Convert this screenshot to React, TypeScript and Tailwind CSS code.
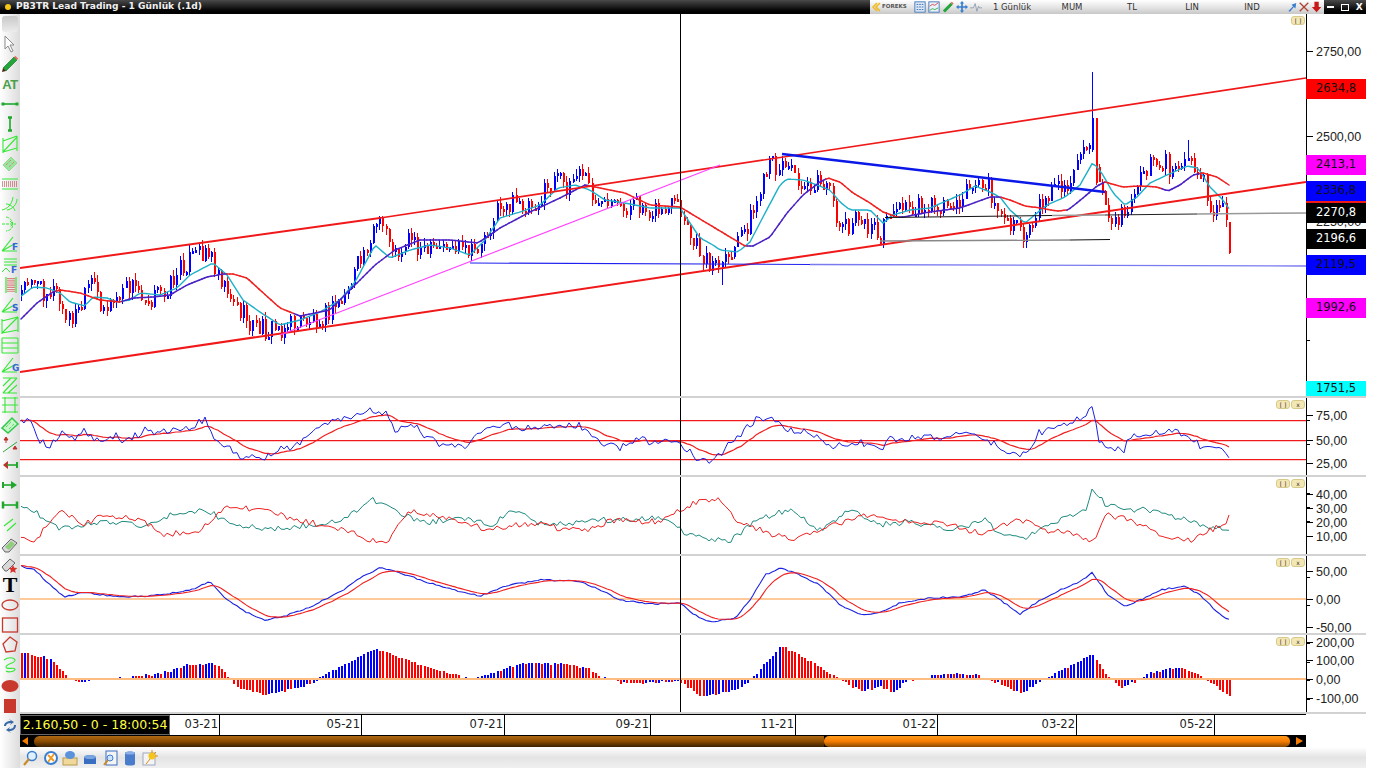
import type { ReactNode } from "react";

type Pt = [number, number];

const lerp = (pts: Pt[], x: number) => {
  if (x <= pts[0][0]) return pts[0][1];
  for (let i = 1; i < pts.length; i++) {
    if (x <= pts[i][0]) {
      const [x0, y0] = pts[i - 1];
      const [x1, y1] = pts[i];
      return y0 + ((y1 - y0) * (x - x0)) / (x1 - x0);
    }
  }
  return pts[pts.length - 1][1];
};
const rnd = (i: number) => {
  const v = Math.sin(i * 12.9898 + 4.1) * 43758.5453;
  return v - Math.floor(v);
};
const ema = (a: number[], n: number) => {
  const k = 2 / (n + 1);
  const out: number[] = [];
  a.forEach((v, i) => out.push(i === 0 ? v : out[i - 1] + k * (v - out[i - 1])));
  return out;
};
const STEP = 3.17;
const COUNT = 382;
const xs = Array.from({ length: COUNT }, (_, i) => Math.round(21 + i * STEP));
const path = (x: number[], y: number[]) =>
  x.map((v, i) => `${i ? "L" : "M"}${v} ${y[i].toFixed(1)}`).join("");

const pricePts: Pt[] = [
  [20, 295], [30, 272], [40, 290], [55, 290], [65, 322], [80, 310], [90, 282], [105, 310], [115, 300], [130, 285],
  [150, 298], [165, 290], [185, 262], [205, 248], [218, 270], [235, 305], [250, 325], [270, 330], [300, 322],
  [330, 312], [345, 295], [360, 260], [375, 225], [385, 228], [395, 255], [410, 235], [425, 255], [445, 245],
  [470, 255], [480, 245], [500, 205], [520, 205], [540, 200], [555, 178], [565, 185], [582, 172], [592, 195],
  [600, 210], [620, 210], [640, 205], [660, 212], [675, 205], [690, 240], [705, 260], [722, 270], [740, 240],
  [755, 205], [770, 165], [785, 165], [800, 180], [825, 185], [840, 225], [860, 222], [880, 235], [890, 210],
  [920, 205], [950, 205], [975, 182], [990, 190], [1005, 225], [1025, 235], [1035, 210], [1050, 190], [1070, 185],
  [1085, 150], [1091, 130], [1100, 180], [1110, 215], [1125, 215], [1140, 175], [1155, 160], [1175, 170],
  [1187, 155], [1200, 175], [1210, 210], [1225, 212], [1230, 225],
];
const closes = xs.map((x, i) => lerp(pricePts, x) + (rnd(i) - 0.5) * 22);
const candles = xs
  .filter((x) => x <= 1231)
  .map((x, i, all) => {
    const open = i ? closes[i - 1] : closes[0] + 5;
    const close = closes[i];
    const top = Math.min(open, close);
    const bottom = Math.max(open, close);
    let hi = top - rnd(i + 500) * 7;
    let lo = bottom + rnd(i + 900) * 7;
    let up = close < open;
    let bodyTop = top;
    let bodyBot = bottom;
    if (x >= 1091 && x <= 1093) { hi = 72; bodyTop = 118; bodyBot = 150; lo = 152; up = true; }
    if (x >= 1094 && x <= 1096) { bodyTop = 118; bodyBot = 183; hi = 118; lo = 185; up = false; }
    if (i === all.length - 1) { bodyTop = 222; bodyBot = 253; hi = 222; lo = 254; up = false; }
    if (x >= 721 && x <= 723) lo = 285;
    if (x >= 1186 && x <= 1188) hi = 140;
    return { x, hi, lo, bodyTop, bodyBot: Math.max(bodyBot, bodyTop + 3), up };
  });
const shown = candles.length;
const cx = xs.slice(0, shown);

const fastPts: Pt[] = [
  [20, 297], [33, 287], [47, 288], [60, 293], [70, 302], [85, 306], [93, 297], [107, 298], [117, 302], [130, 300], [140, 293],
  [160, 295], [177, 288], [190, 275], [213, 263], [227, 275], [243, 300], [260, 312], [280, 325], [300, 320], [320, 312],
  [340, 300], [355, 282], [375, 245], [390, 258], [410, 250], [430, 245], [450, 248], [470, 255], [485, 240], [500, 218],
  [520, 212], [540, 205], [558, 188], [575, 185], [590, 190], [605, 200], [625, 203], [650, 208], [680, 208], [690, 223],
  [700, 238], [713, 245], [720, 250], [738, 252], [750, 242], [763, 217], [780, 185], [787, 179], [803, 180], [817, 185],
  [830, 190], [840, 202], [850, 210], [870, 210], [883, 223], [893, 215], [910, 210], [930, 208], [960, 195], [975, 186],
  [990, 192], [1000, 197], [1010, 210], [1025, 223], [1037, 213], [1047, 205], [1065, 197], [1080, 185], [1093, 162],
  [1103, 175], [1113, 193], [1125, 205], [1137, 197], [1150, 183], [1167, 175], [1187, 166], [1198, 168], [1210, 187],
  [1223, 200], [1232, 213],
];
const midPts: Pt[] = [
  [20, 320], [37, 303], [53, 292], [60, 290], [80, 293], [100, 300], [120, 302], [133, 298], [153, 297], [170, 295], [187, 285],
  [207, 277], [223, 274], [233, 274], [247, 278], [260, 290], [280, 308], [300, 316], [330, 310], [350, 290], [375, 265],
  [395, 250], [420, 240], [450, 240], [478, 243], [500, 228], [530, 212], [560, 198], [585, 185], [600, 188], [625, 193],
  [650, 205], [680, 207], [745, 246], [753, 246], [770, 237], [787, 213], [803, 195], [820, 182], [828, 178], [840, 182],
  [853, 193], [870, 203], [883, 212], [897, 217], [903, 217], [930, 212], [960, 208], [990, 197], [1000, 197], [1010, 200],
  [1025, 206], [1040, 208], [1057, 211], [1068, 210], [1083, 198], [1097, 186], [1105, 182], [1123, 187], [1140, 186],
  [1157, 187], [1168, 191], [1180, 185], [1193, 175], [1203, 173], [1217, 177], [1232, 187],
];
const purpleRanges: Pt[] = [[20, 58], [125, 228], [295, 590], [750, 828], [900, 1002], [1068, 1105], [1165, 1200]];
const fast = cx.map((x) => lerp(fastPts, x));
const mid = cx.map((x) => lerp(midPts, x));

const rsiPts: Pt[] = [
  [20, 418], [30, 422], [40, 440], [50, 448], [60, 432], [70, 440], [85, 430], [95, 438], [105, 440], [115, 436], [125, 442],
  [145, 430], [165, 432], [185, 428], [205, 420], [215, 440], [230, 450], [245, 458], [265, 458], [280, 448], [300, 445],
  [320, 425], [345, 420], [365, 410], [385, 413], [395, 430], [410, 422], [425, 437], [445, 445], [465, 447], [480, 435],
  [500, 425], [530, 428], [560, 428], [580, 425], [600, 445], [620, 447], [640, 440], [660, 443], [675, 438], [690, 452],
  [700, 463], [715, 458], [735, 440], [755, 420], [770, 418], [790, 430], [810, 432], [830, 445], [850, 445], [870, 442],
  [880, 452], [890, 440], [920, 436], [950, 440], [965, 428], [985, 437], [1005, 452], [1025, 455], [1040, 432], [1060, 425],
  [1080, 420], [1092, 408], [1100, 445], [1125, 450], [1130, 435], [1150, 433], [1185, 432], [1200, 445], [1215, 450],
  [1225, 452], [1232, 460],
];
const diTeal: Pt[] = [
  [20, 505], [40, 515], [60, 530], [80, 525], [100, 522], [140, 525], [170, 515], [205, 510], [235, 525], [270, 530], [310, 525],
  [345, 520], [370, 498], [385, 505], [400, 515], [430, 522], [460, 517], [490, 525], [515, 510], [535, 522], [570, 525],
  [590, 520], [620, 520], [660, 518], [680, 530], [705, 540], [730, 540], [760, 518], [790, 510], [820, 530], [850, 510],
  [880, 525], [905, 522], [950, 530], [985, 520], [1000, 535], [1025, 540], [1045, 525], [1070, 515], [1085, 512], [1093, 487],
  [1105, 505], [1130, 510], [1150, 510], [1170, 515], [1200, 525], [1232, 530],
];
const diRed: Pt[] = [
  [20, 535], [35, 540], [60, 510], [85, 525], [100, 515], [140, 520], [165, 535], [200, 530], [230, 505], [260, 510], [300, 520],
  [345, 530], [385, 545], [410, 510], [430, 515], [460, 522], [490, 530], [515, 525], [540, 525], [570, 530], [590, 530],
  [610, 520], [660, 522], [680, 510], [700, 500], [720, 500], [735, 520], [760, 530], [790, 540], [810, 535], [830, 525],
  [870, 515], [890, 522], [940, 522], [985, 535], [1000, 525], [1025, 520], [1045, 530], [1080, 535], [1093, 543], [1105, 515],
  [1130, 520], [1170, 540], [1195, 540], [1210, 530], [1225, 525], [1232, 512],
];
const macdPts: Pt[] = [
  [20, 566], [35, 570], [50, 585], [65, 597], [85, 592], [110, 596], [130, 597], [160, 595], [190, 590], [210, 582], [225, 598],
  [245, 612], [265, 620], [285, 616], [310, 607], [340, 592], [360, 578], [380, 568], [400, 573], [430, 583], [460, 592],
  [480, 596], [510, 585], [540, 580], [580, 581], [600, 590], [620, 600], [650, 604], [680, 603], [695, 615], [710, 622],
  [735, 618], [750, 600], [765, 575], [780, 568], [800, 575], [820, 585], [840, 605], [860, 615], [880, 612], [900, 603],
  [930, 598], [960, 597], [985, 590], [1000, 600], [1020, 614], [1040, 600], [1060, 590], [1080, 582], [1092, 572], [1108, 595],
  [1125, 607], [1140, 600], [1160, 590], [1185, 586], [1200, 595], [1215, 610], [1232, 622],
];
const histPts: Pt[] = [
  [20, 27], [50, 20], [60, 10], [70, -1], [80, -3], [100, 0], [130, 2], [150, 4], [170, 8], [185, 14], [215, 15], [225, 5],
  [235, -8], [265, -16], [300, -8], [315, -2], [325, 5], [345, 15], [375, 31], [395, 22], [420, 14], [440, 8], [470, 0], [490, 5],
  [520, 16], [560, 15], [590, 10], [600, 2], [620, -4], [680, -3], [700, -18], [740, -10], [755, 5], [780, 33], [790, 28],
  [815, 15], [835, 2], [860, -12], [880, -8], [893, -14], [905, -2], [925, 1], [945, 6], [975, 4], [1000, -5], [1020, -15],
  [1040, -2], [1060, 8], [1092, 25], [1108, 2], [1120, -9], [1140, 0], [1150, 7], [1180, 12], [1200, 3], [1210, -4], [1230, -18],
];

const jitter = (pts: Pt[], amp: number, seed: number) => cx.map((x, i) => lerp(pts, x) + (rnd(i + seed) - 0.5) * amp);
const rsiLine = jitter(rsiPts, 8, 40);
const rsiAvg = ema(rsiLine, 14);
const macdLine = jitter(macdPts, 1.5, 70);
const macdAvg = ema(macdLine, 8);
const hist = cx.map((x, i) => lerp(histPts, x) + (rnd(i + 222) - 0.5) * 2.2);

function Chart({ top, height, children }: { top: number; height: number; children: ReactNode }) {
  return (
    <svg width={1286} height={height} viewBox={`20 ${top} 1286 ${height}`} className="block shrink-0">
      {children}
      <line x1={680.5} x2={680.5} y1={top} y2={top + height} stroke="#000" strokeWidth={1} />
    </svg>
  );
}

function Axis({ ticks }: { ticks: { y: number; label?: string }[] }) {
  return (
    <div className="relative h-full w-[60px] border-l border-black font-['Liberation_Sans',sans-serif] text-[12.5px] text-[#222]">
      {ticks.map((t) => (
        <div key={t.y} className="absolute left-0 flex items-center" style={{ top: t.y - 8 }}>
          <span className={`block h-px bg-black ${t.label ? "w-[6px]" : "w-[3px]"}`} />
          {t.label && <span className="relative top-px ml-[3px] h-4 leading-4">{t.label}</span>}
        </div>
      ))}
    </div>
  );
}

function PanelBtn({ label }: { label: string }) {
  return (
    <span className="flex h-[9px] w-[14px] items-center justify-center rounded-[3px] border border-[#d8c98a] bg-[#f3e7b4] text-[6px] leading-none text-[#333]">
      {label}
    </span>
  );
}

function PanelButtons({ main }: { main?: boolean }) {
  return (
    <div className="absolute right-[1px] top-[2px] flex gap-px">
      {!main && <PanelBtn label="[ ]" />}
      {main ? <PanelBtn label="[ ]" /> : <PanelBtn label="x" />}
    </div>
  );
}

function Panel({ top, height, ticks, main, children }: { top: number; height: number; ticks: { y: number; label?: string }[]; main?: boolean; children: ReactNode }) {
  return (
    <div className="flex" style={{ height }}>
      <div className="relative">
        <Chart top={top} height={height}>{children}</Chart>
        <PanelButtons main={main} />
      </div>
      <Axis ticks={ticks.map((t) => ({ ...t, y: t.y - top }))} />
    </div>
  );
}

const Sep = () => <div className="h-[2px] w-[1346px] bg-[#d2d2d2]" />;

const badges = [
  { y: 79, h: 20, t: "2634,8", c: "bg-[#ff0000] text-[#111]" },
  { y: 155, h: 20, t: "2413,1", c: "bg-[#ff00ff] text-[#111]" },
  { y: 181, h: 20, t: "2336,8", c: "bg-[#0000ff] text-[#111]" },
  { y: 203, h: 20, t: "2270,8", c: "bg-black text-white" },
  { y: 229, h: 20, t: "2196,6", c: "bg-black text-white" },
  { y: 255, h: 20, t: "2119,5", c: "bg-[#0000ff] text-[#111]" },
  { y: 298, h: 20, t: "1992,6", c: "bg-[#ff00ff] text-[#111]" },
  { y: 381, h: 15, t: "1751,5", c: "bg-[#00ffff] text-[#111]" },
];

const G = "#35e835";
const D = "#1fa82c";
const R = "#c8382c";
const ic = (children: ReactNode) => (
  <svg width={18} height={18} viewBox="0 0 18 18" fill="none">{children}</svg>
);
const fan = (letter: string) =>
  ic(<>
    <path d="M1 16L12 2M1 16L15 8M1 16H16" stroke={G} strokeWidth={1.2} />
    <text x={11} y={15} fontSize={9} fontWeight={700} fill="#3566d6" fontFamily="DejaVu Sans">{letter}</text>
  </>);

const tools: ReactNode[] = [
  ic(<path d="M4 1v13l3-3 3 6 2-1-3-6h4z" fill="#fff" stroke="#8a8a8a" strokeWidth={1} />),
  ic(<><path d="M2 13L13 2l3 3L5 16z" fill="#22a63a" stroke="#176e26" strokeWidth={0.6} /><path d="M13 2l1.5-1 2.5 2.5-1 1.5z" fill="#e8685c" /><path d="M2 13l-1 4 4-1z" fill="#4a2a12" /></>),
  <span className="font-['Liberation_Sans',sans-serif] text-[13px] font-bold leading-none tracking-[-0.5px] text-[#4aa04a]">AT</span>,
  ic(<><path d="M2 9h14" stroke={D} strokeWidth={1.6} /><path d="M2 7.5v3M16 7.5v3" stroke={D} strokeWidth={3} /></>),
  ic(<><path d="M9 2v14" stroke={D} strokeWidth={1.6} /><path d="M7 2.5h4M7 15.5h4" stroke={D} strokeWidth={2.5} /></>),
  ic(<path d="M2 3v15M16 1v15M2 6L16 1M2 17l14-4M2 17L16 2" stroke={G} strokeWidth={1.1} />),
  ic(<><path d="M2 10l8-8 6 6-8 8z" fill="#9ae69e" stroke="#8fd98f" /><path d="M5 10l5-5M8 12l5-5" stroke="#e06a6a" strokeDasharray="1 1" /></>),
  ic(<><path d="M1 4h16M1 14h16" stroke={G} /><path d="M1 7h16M1 9h16M1 11h16" stroke="#b03030" strokeDasharray="1 1" /></>),
  ic(<path d="M1 15C6 14 11 10 12 2M5 9c4 0 8 3 9 7M16 4c0 5-4 10-10 11" stroke={G} />),
  ic(<path d="M5 2c8 1 10 13 0 14M1 9h14M9 6l3 3-3 3" stroke={G} strokeDasharray="3 1" />),
  fan("F"),
  ic(<><path d="M3 3h13M3 6h13M3 9h13M1 16l4-4 4 4" stroke={G} /><text x={10} y={17} fontSize={9} fontWeight={700} fill="#3566d6" fontFamily="DejaVu Sans">F</text></>),
  ic(<><path d="M5 1v16M15 1v16" stroke={G} strokeWidth={1.2} /><path d="M7 2v14M9 2v14M11 2v14M13 2v14" stroke="#d23a3a" strokeWidth={1.2} strokeDasharray="1.2 1" /></>),
  fan("S"),
  ic(<path d="M1 3v15M17 1v15M1 5L17 1M1 17l16-3M1 17L17 1" stroke={G} strokeWidth={1.1} />),
  ic(<path d="M1 2h16M1 7h16M1 12h16M1 17h16M1 2v15M17 2v15" stroke={G} strokeWidth={1.1} />),
  fan("G"),
  ic(<path d="M2 2h14M2 17h14M2 17L16 2M2 10l8-8M7 17L16 9" stroke={G} strokeWidth={1.1} />),
  ic(<path d="M4 1v16M14 1v16M1 2h16M1 9h16M1 16h16" stroke={G} strokeWidth={1.1} />),
  ic(<><path d="M1 12L11 2l6 6L7 17z" fill="#c8f5c8" stroke="#2fc84a" strokeWidth={1.5} /><path d="M5 11l5-5M8 13l5-5" stroke="#2fc84a" strokeDasharray="1 1" /></>),
  ic(<><path d="M2 16L16 6" stroke="#2fa83a" /><path d="M5 1l-2 3h4zM5 4v3M14 10l-2 3h4z" fill="#c0302a" stroke="#c0302a" /></>),
  ic(<><path d="M2 9l5-4v8z" fill="#c0302a" /><path d="M6 9h10" stroke={D} strokeWidth={1.6} /><path d="M16 6v6" stroke={D} strokeWidth={2} /></>),
  ic(<><path d="M2 6v6" stroke={D} strokeWidth={2} /><path d="M2 9h9" stroke={D} strokeWidth={1.6} /><path d="M16 9l-6-4v8z" fill="#1fa82c" /></>),
  ic(<><path d="M2 9h14" stroke={D} strokeWidth={1.6} /><path d="M2 5.5v7M16 5.5v7" stroke={D} strokeWidth={2.5} /></>),
  ic(<path d="M3 10l9-7M6 15l9-8" stroke="#35e835" strokeWidth={1.2} />),
  ic(<><path d="M1 12l9-9 6 4-8 9H4z" fill="#d8d8d8" stroke="#666" /><path d="M4 11l6-6 4 3-6 6z" fill="#8fce7c" /></>),
  ic(<><path d="M1 11l8-8 5 4-8 8H4z" fill="#d8d8d8" stroke="#666" /><path d="M12 9l1.3 2.8 3 .3-2.2 2 .6 3-2.7-1.5-2.7 1.5.6-3-2.2-2 3-.3z" fill="#d8302a" /></>),
  <span className="font-['Liberation_Serif',serif] text-[22px] font-bold leading-[20px] text-black">T</span>,
  ic(<ellipse cx={9} cy={9} rx={8} ry={5} stroke={R} strokeWidth={1.3} />),
  ic(<rect x={1.5} y={2} width={15} height={14} stroke={R} strokeWidth={1.3} />),
  ic(<path d="M9 1l7 5-2 9-9 1-3-8z" stroke={R} strokeWidth={1.3} />),
  ic(<path d="M3 4c4-3 10-3 11 0s-9 4-9 7 8 0 9 2-6 4-9 2" stroke={G} strokeWidth={1.1} />),
  ic(<ellipse cx={9} cy={9} rx={8.5} ry={6} fill={R} />),
  ic(<rect x={3} y={2} width={12} height={14} fill={R} />),
  ic(<path d="M3 9c0-3 3-5 7-5l-2-2 5 3-4 3 1-2c-3 0-5 1-5 3zM15 8c0 4-3 6-7 6l2 2-5-3 4-3-1 2c3 0 5-1 5-4z" fill="#3868a8" />),
];

const smallIcon = (children: ReactNode, w = 14) => (
  <svg width={w} height={14} viewBox="0 0 14 14" fill="none" className="shrink-0">{children}</svg>
);
const topIcon = (children: ReactNode) => (
  <svg width={12} height={12} viewBox="0 0 14 14" fill="none" className="shrink-0">{children}</svg>
);

const topIcons: ReactNode[] = [
  topIcon(<><rect x={1} y={1} width={12} height={12} fill="#dfeaf7" stroke="#3a72b8" /><path d="M3 4h8M3 7h8M3 10h8" stroke="#2a62a8" strokeDasharray="2 1" /></>),
  topIcon(<><rect x={1} y={1} width={12} height={12} fill="#eaf2fb" stroke="#3a72b8" /><path d="M2 6l3-2 3 1 4-3" stroke="#d83a3a" /><path d="M2 11l3-2 3 1 4-2" stroke="#2fa83a" /></>),
  topIcon(<><path d="M1 11L10 2l2.5 2.5-9 9z" fill="#22a63a" /><path d="M10 2l1.5-1 2 2-1 1.5z" fill="#e8685c" /></>),
  topIcon(<path d="M7 0l2.5 3H8v3h3V4.5L14 7l-3 2.5V8H8v3h1.5L7 14l-2.5-3H6V8H3v1.5L0 7l3-2.5V6h3V3H4.5z" fill="#3a7ed0" />),
  topIcon(<path d="M0 8h4l2-5 2 9 2-6 1 2h3" stroke="#8a9ab0" />),
];

function Candles() {
  return (
    <g shapeRendering="crispEdges">
      {candles.map((c, i) => {
        const color = c.up ? "#0000ff" : "#ff0000";
        return (
          <g key={i}>
            <rect x={c.x} y={c.hi} width={1} height={c.lo - c.hi} fill={color} />
            <rect x={c.x} y={c.bodyTop} width={2} height={c.bodyBot - c.bodyTop} fill={color} />
          </g>
        );
      })}
    </g>
  );
}

function MidLine() {
  const segs: ReactNode[] = [];
  for (let i = 1; i < shown; i++) {
    const purple = purpleRanges.some(([a, b]) => cx[i] >= a && cx[i] <= b);
    segs.push(
      <line key={i} x1={cx[i - 1]} y1={mid[i - 1]} x2={cx[i]} y2={mid[i]} stroke={purple ? "#4a20c4" : "#f02020"} strokeWidth={1.5} strokeLinecap="round" />
    );
  }
  return <>{segs}</>;
}

function HLine({ y }: { y: number }) {
  return (
    <g shapeRendering="crispEdges">
      <line x1={20} x2={1306} y1={y + 1.5} y2={y + 1.5} stroke="#ffc8c8" strokeWidth={1} />
      <line x1={20} x2={1306} y1={y + 0.5} y2={y + 0.5} stroke="#f01818" strokeWidth={1} />
    </g>
  );
}

const timeLabels: [string, number][] = [
  ["03-21", 219], ["05-21", 361], ["07-21", 504], ["09-21", 650], ["11-21", 795], ["01-22", 937], ["03-22", 1076], ["05-22", 1214],
];

const bottomIcons: ReactNode[] = [
  <><circle cx={10} cy={6} r={4.5} stroke="#3a7ed0" strokeWidth={1.5} fill="#dff0ff" /><path d="M7 9l-5 6" stroke="#c88a2a" strokeWidth={2.2} /></>,
  <><circle cx={9} cy={8} r={6} stroke="#3a7ed0" strokeWidth={2} fill="#fff" /><path d="M6 5l6 6M12 4L6 12" stroke="#f0961a" strokeWidth={1.8} /></>,
  <><rect x={1} y={8} width={14} height={7} fill="#f0d89a" stroke="#b89a4a" /><ellipse cx={8} cy={5} rx={5} ry={4} fill="#5a92dc" /></>,
  <><path d="M2 8c0-4 12-4 12 0v6H2z" fill="#3a6ec0" /><ellipse cx={8} cy={7} rx={6} ry={2} fill="#7aa4e0" /></>,
  <><rect x={4} y={1} width={11} height={14} fill="#f4f4f4" stroke="#3a6ec0" /><circle cx={8} cy={8} r={3} stroke="#3a7ed0" fill="#cfe4fa" /><path d="M6 10l-4 5" stroke="#c88a2a" strokeWidth={2} /></>,
  <><path d="M3 3c0-2 10-2 10 0v11c0 2-10 2-10 0z" fill="#4a7ccc" /><ellipse cx={8} cy={3} rx={5} ry={1.6} fill="#8aaee6" /></>,
  <><rect x={1} y={3} width={12} height={12} fill="#f4f4f4" stroke="#a0a8c0" /><circle cx={10} cy={6} r={3.5} fill="#f5c518" /><path d="M10 0v3M16 6h-3M14 2l-2 2M4 14l4-5" stroke="#e08a1a" /></>,
];

export default function App() {
  return (
    <div className="h-[768px] w-[1380px] overflow-hidden bg-white font-['DejaVu_Sans',sans-serif]">
      <div className="w-[1366px]">
        <div className="flex h-[14px] items-center bg-gradient-to-b from-[#4a4a4a] via-[#1c1c1c] to-black">
          <span className="ml-[5px] h-[6px] w-[6px] rounded-full bg-[#f5c518]" />
          <span className="ml-[5px] text-[9.1px] font-bold leading-none text-[#f0f0f0]">PB3TR Lead Trading - 1 Günlük (.1d)</span>
          <div className="ml-auto flex h-full w-[496px] items-center bg-gradient-to-b from-white via-[#e6e6e6] to-[#c8c8c8] text-[8.5px] text-[#333]">
            <span className="ml-[2px] flex w-[42px] shrink-0 items-center gap-px">
              <svg width={9} height={10} viewBox="0 0 9 10" fill="none"><path d="M5 1L1 5l4 4M8 1L4 5l4 4" stroke="#f0b818" strokeWidth={1.5} /></svg>
              <span className="text-[5.5px] font-bold leading-none text-[#555]">FOREKS</span>
            </span>
            <div className="flex w-[68px] shrink-0 items-center gap-[2px]">{topIcons.map((t, i) => <span key={i} className="block">{t}</span>)}</div>
            <div className="flex shrink-0 items-center">
              {["1 Günlük", "MUM", "TL", "LIN", "IND"].map((t) => (
                <span key={t} className="w-[60px] text-center">{t}</span>
              ))}
            </div>
            <div className="ml-[4px] flex shrink-0 items-center gap-[1px]">
              {smallIcon(<path d="M3 12l6-6-2-2 6-2-1 7-2-2-5 6z" fill="#3a7ed0" />, 11)}
              {smallIcon(<path d="M2 2l10 10M12 2L2 12" stroke="#b04030" strokeWidth={1.5} />, 12)}
              {smallIcon(<path d="M4 1h5v6h3l-5.5 6L1 7h3z" fill="#c81818" />, 12)}
            </div>
            <div className="ml-auto flex h-full w-[42px] shrink-0 items-center justify-around bg-gradient-to-b from-[#4a4a4a] via-[#1c1c1c] to-black text-[9px] font-bold leading-none text-white">
              <span className="block h-[2px] w-[7px] bg-white" />
              <span className="block h-[7px] w-[8px] border border-white" />
              <span>X</span>
            </div>
          </div>
        </div>

        <div className="flex">
          <div className="flex h-[754px] w-[20px] flex-col items-center bg-gradient-to-r from-white to-[#dcdcdc]">
            <div className="mt-[2px] h-[16px] w-[16px] rounded-[3px] bg-gradient-to-b from-[#c8c8c8] to-[#ececec]" />
            <div className="mt-[2px] flex flex-col items-center">
              {tools.map((t, i) => (
                <div key={i} className="flex h-[20.06px] w-[20px] items-center justify-center">{t}</div>
              ))}
            </div>
          </div>

          <div className="w-[1346px]">
            <div className="relative">
              <Panel
                top={14}
                height={382}
                main
                ticks={[
                  { y: 51, label: "2750,00" }, { y: 93 }, { y: 136, label: "2500,00" }, { y: 178 },
                  { y: 221, label: "2250,00" }, { y: 263 }, { y: 306 }, { y: 348 }, { y: 391 },
                ]}
              >
                <Candles />
                <path d={path(cx, fast)} stroke="#1cb0c8" strokeWidth={1.4} fill="none" />
                <MidLine />
                <path d="M20 268L380 218" stroke="#f01818" strokeWidth={2} />
                <path d="M380 218L1306 78" stroke="#f01818" strokeWidth={1.7} />
                <path d="M20 372L1306 182" stroke="#f01818" strokeWidth={2} />
                <path d="M280 335L720 165" stroke="#ff40ff" strokeWidth={1.1} />
                <path d="M782 154L1105 192" stroke="#0a18e8" strokeWidth={2.5} />
                <path d="M470 263L810 264.5" stroke="#2020f0" strokeWidth={1.1} />
                <path d="M810 264.5L1306 266" stroke="#7a7af0" strokeWidth={1.4} />
                <path d="M885 217.5L1052 215.5" stroke="#111" strokeWidth={1} />
                <path d="M1052 215.5L1105 215" stroke="#999" strokeWidth={1.5} />
                <path d="M1105 215L1197 214" stroke="#222" strokeWidth={1} />
                <path d="M1197 214L1306 213" stroke="#999" strokeWidth={1.5} />
                <path d="M880 241L1070 240" stroke="#888" strokeWidth={1.3} />
                <path d="M1070 240L1110 239.5" stroke="#111" strokeWidth={1} />
              </Panel>
              {badges.map((b) => (
                <div
                  key={b.t}
                  className={`absolute left-[1286px] flex w-[60px] items-center justify-center text-[11.5px] leading-none ${b.c}`}
                  style={{ top: b.y - 14, height: b.h }}
                >
                  {b.t}
                </div>
              ))}
              <div className="absolute left-[1286px] top-[187px] h-[2px] w-[60px] bg-[#f01818]" />
            </div>
            <Sep />
            <Panel
              top={398}
              height={77}
              ticks={[{ y: 415, label: "75,00" }, { y: 428 }, { y: 440, label: "50,00" }, { y: 452 }, { y: 463, label: "25,00" }]}
            >
              <HLine y={420} />
              <HLine y={440} />
              <HLine y={459} />
              <path d={path(cx, rsiAvg)} stroke="#f02020" strokeWidth={1.2} fill="none" />
              <path d={path(cx, rsiLine)} stroke="#1a22e0" strokeWidth={1} fill="none" />
            </Panel>
            <Sep />
            <Panel
              top={477}
              height={77}
              ticks={[{ y: 494, label: "40,00" }, { y: 501 }, { y: 508, label: "30,00" }, { y: 515 }, { y: 522, label: "20,00" }, { y: 529 }, { y: 536, label: "10,00" }]}
            >
              <path d={path(cx, jitter(diTeal, 6, 300))} stroke="#1f8a80" strokeWidth={1} fill="none" />
              <path d={path(cx, jitter(diRed, 6, 340))} stroke="#f02020" strokeWidth={1} fill="none" />
            </Panel>
            <Sep />
            <Panel top={556} height={77} ticks={[{ y: 571, label: "50,00" }, { y: 585 }, { y: 599, label: "0,00" }, { y: 613 }, { y: 627, label: "-50,00" }]}>
              <line x1={20} x2={1306} y1={599} y2={599} stroke="#ffb878" strokeWidth={1.5} />
              <path d={path(cx, macdLine)} stroke="#1a22e0" strokeWidth={1.1} fill="none" />
              <path d={path(cx, macdAvg)} stroke="#f02020" strokeWidth={1.1} fill="none" />
            </Panel>
            <Sep />
            <Panel
              top={635}
              height={77}
              ticks={[{ y: 642, label: "200,00" }, { y: 651 }, { y: 660, label: "100,00" }, { y: 670 }, { y: 679, label: "0,00" }, { y: 688 }, { y: 698, label: "-100,00" }, { y: 707 }]}
            >
              <g shapeRendering="crispEdges">
                {hist.map((h, i) => {
                  const prev = i ? hist[i - 1] : h;
                  return (
                    <rect
                      key={i}
                      x={cx[i]}
                      y={h > 0 ? 679 - h : 679}
                      width={2}
                      height={Math.abs(h)}
                      fill={h > prev ? "#0000ff" : "#ff0000"}
                    />
                  );
                })}
                <rect x={20} y={678} width={1286} height={2} fill="#ffbc80" />
              </g>
            </Panel>
            <Sep />

            <div className="relative flex h-[21px] w-[1286px] border-t border-black text-[11.5px] text-[#222]">
              <div className="flex h-[20px] w-[150px] items-center justify-center border border-[#666] bg-black text-[12.5px] text-[#ffff40]">2.160,50 - 0 - 18:00:54</div>
              <div className="relative flex-1">
                {timeLabels.map(([t, x]) => (
                  <div key={t} className="absolute top-0 flex h-[20px] items-center border-r border-black pr-px leading-none" style={{ right: 1136 - (x - 170) - 1 }}>
                    {t}
                  </div>
                ))}
              </div>
            </div>

            <div className="flex h-[12px] w-[1286px] items-center bg-black">
              <svg width={14} height={10} viewBox="0 0 14 10" className="shrink-0"><path d="M8 1L2 5l6 4z" fill="#f57c00" /></svg>
              <div className="flex h-[11px] flex-1">
                <div className="w-[790px] rounded-l-[6px] bg-gradient-to-b from-[#b06a14] via-[#8a4a00] to-[#3a2000]" />
                <div className="flex-1 rounded-[5px] bg-gradient-to-b from-[#ff9a1a] via-[#f57c00] to-[#8a4a00]" />
              </div>
              <svg width={16} height={10} viewBox="0 0 16 10" className="shrink-0"><path d="M6 1l7 4-7 4z" fill="#f57c00" /></svg>
            </div>
          </div>
        </div>
      </div>
      <div className="relative -mt-[21px] ml-[20px] flex h-[21px] w-[1346px] items-center gap-[4px] bg-gradient-to-b from-white via-[#e4e4e4] to-[#f0f0f0] pl-[2px]">
        {bottomIcons.map((d, i) => (
          <svg key={i} width={16} height={16} viewBox="0 0 16 16" fill="none">{d}</svg>
        ))}
      </div>
    </div>
  );
}
